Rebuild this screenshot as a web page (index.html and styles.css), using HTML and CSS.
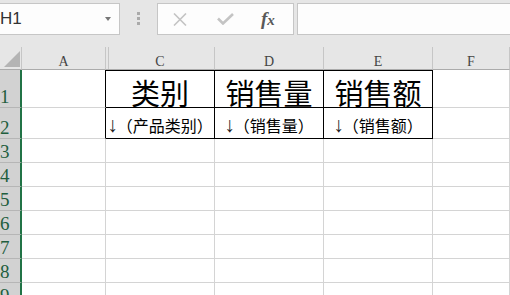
FILE: index.html
```html
<!DOCTYPE html>
<html lang="zh-CN">
<head>
    <meta charset="UTF-8">
    <meta name="viewport" content="width=device-width, initial-scale=1.0">
    <title>Sheet1</title>
    <link rel="stylesheet" href="styles.css">
</head>
<body>

<div class="toolbar">
    <div class="name-box">
        <span class="name">H1</span>
        <span class="drop"></span>
    </div>
    <div class="grip"><i></i><i></i><i></i></div>
    <div class="fx-box">
        <svg class="cancel" width="14" height="13" viewBox="0 0 14 13">
            <path d="M1 0.5 L13 12.5 M13 0.5 L1 12.5" stroke="#c4c4c4" stroke-width="1.6" fill="none"/>
        </svg>
        <svg class="enter" width="17" height="12" viewBox="0 0 17 12">
            <path d="M1 5.5 L6 10.5 L16 1" stroke="#c4c4c4" stroke-width="2.6" fill="none"/>
        </svg>
        <span class="fx">f<span>x</span></span>
    </div>
    <div class="formula"></div>
</div>

<div class="sheet">
    <!-- column headers (B is hidden) -->
    <div class="ch corner">
        <svg width="16" height="16" viewBox="0 0 16 16"><path d="M16 0 L16 16 L0 16 Z" fill="#b4b4b4"/></svg>
    </div>
    <div class="ch">A</div>
    <div class="ch after-hidden">C</div>
    <div class="ch">D</div>
    <div class="ch">E</div>
    <div class="ch">F</div>

    <!-- row 1 -->
    <div class="rh">1</div>
    <div class="c edge"></div>
    <div class="c t top big">类别</div>
    <div class="c t top big">销售量</div>
    <div class="c t top big">销售额</div>
    <div class="c"></div>

    <!-- row 2 -->
    <div class="rh">2</div>
    <div class="c edge"></div>
    <div class="c t small"><span class="arrow">↓</span>（产品类别）</div>
    <div class="c t small"><span class="arrow">↓</span>（销售量）</div>
    <div class="c t small"><span class="arrow">↓</span>（销售额）</div>
    <div class="c"></div>

    <div class="rh">3</div><div class="c"></div><div class="c"></div><div class="c"></div><div class="c"></div><div class="c"></div>
    <div class="rh">4</div><div class="c"></div><div class="c"></div><div class="c"></div><div class="c"></div><div class="c"></div>
    <div class="rh">5</div><div class="c"></div><div class="c"></div><div class="c"></div><div class="c"></div><div class="c"></div>
    <div class="rh">6</div><div class="c"></div><div class="c"></div><div class="c"></div><div class="c"></div><div class="c"></div>
    <div class="rh">7</div><div class="c"></div><div class="c"></div><div class="c"></div><div class="c"></div><div class="c"></div>
    <div class="rh">8</div><div class="c"></div><div class="c"></div><div class="c"></div><div class="c"></div><div class="c"></div>
    <div class="rh">9</div><div class="c"></div><div class="c"></div><div class="c"></div><div class="c"></div><div class="c"></div>
</div>

</body>
</html>
```

FILE: styles.css
```css
body {
    margin: 0;
    background-color: #fff;
    overflow: hidden;
    font-family: "Liberation Sans", Arial, sans-serif;
}
.toolbar {
    display: flex;
    align-items: flex-start;
    height: 47px;
    padding-top: 3px;
    box-sizing: border-box;
    background-color: #e6e6e6;
}
.name-box {
    display: flex;
    align-items: center;
    width: 120px;
    height: 32px;
    box-sizing: border-box;
    background-color: #fdfdfd;
    border: 1px solid #c6c6c6;
    border-left: none;
}
.name {
    font-size: 17px;
    color: #333;
}
.drop {
    margin-left: auto;
    margin-right: 8px;
    border-style: solid;
    border-width: 4px 3.5px 0;
    border-color: #777 transparent transparent;
}
.grip {
    display: flex;
    flex-direction: column;
    gap: 2px;
    margin: 9px 0 0 17px;
}
.grip i {
    width: 3px;
    height: 3px;
    background-color: #aaa;
}
.fx-box {
    display: flex;
    align-items: center;
    width: 137px;
    height: 32px;
    margin-left: 17px;
    padding-left: 15px;
    box-sizing: border-box;
    background-color: #fdfdfd;
    border: 1px solid #c6c6c6;
}
.enter {
    margin-left: 30px;
}
.fx {
    margin-left: 27px;
    font-family: "Liberation Serif", serif;
    font-style: italic;
    font-weight: bold;
    font-size: 19px;
    color: #595959;
}
.fx span {
    font-size: 15px;
}
.formula {
    flex: 1;
    height: 32px;
    margin-left: 3px;
    box-sizing: border-box;
    background-color: #fdfdfd;
    border: 1px solid #c6c6c6;
    border-right: none;
}

.sheet {
    display: grid;
    grid-template-columns: 22px 84px 109px 109px 109px 1fr;
    grid-template-rows: 23px 38px 31px repeat(7, 24px);
}
.sheet > div {
    box-sizing: border-box;
    display: flex;
    justify-content: center;
    align-items: flex-end;
}
.ch {
    background-color: #e6e6e6;
    border-right: 1px solid #c6c6c6;
    border-bottom: 1px solid #ababab;
    font-family: "Liberation Serif", serif;
    font-size: 14px;
    line-height: 14px;
    color: #444;
}
.corner {
    justify-content: flex-start;
    padding: 0 0 2px 3px;
}
.corner svg {
    display: block;
}
.after-hidden {
    box-shadow: inset 2px 0 0 #e6e6e6, inset 3px 0 0 #c6c6c6;
}
.rh {
    justify-content: flex-start !important;
    background-color: #d2d2d2;
    border-right: 2px solid #217346;
    border-bottom: 1px solid #b6b6b6;
    padding-bottom: 1px;
    font-family: "Liberation Serif", serif;
    font-size: 19px;
    line-height: 19px;
    color: #1f5e3e;
}
.c {
    border-right: 1px solid #d4d4d4;
    border-bottom: 1px solid #d4d4d4;
    font-family: "Noto Sans CJK SC", sans-serif;
    color: #000;
    white-space: nowrap;
}
.c.edge {
    border-right-color: #000;
}
.c.t {
    border-right-color: #000;
    border-bottom-color: #000;
}
.c.top {
    border-top: 1px solid #000;
}
.big {
    font-size: 29px;
    line-height: 29px;
}
.small {
    font-size: 16px;
    line-height: 16px;
    padding-bottom: 5px;
}
.arrow {
    font-family: "Liberation Serif", serif;
    font-size: 21px;
    line-height: 16px;
    margin-right: -1px;
    color: #222;
}
```
